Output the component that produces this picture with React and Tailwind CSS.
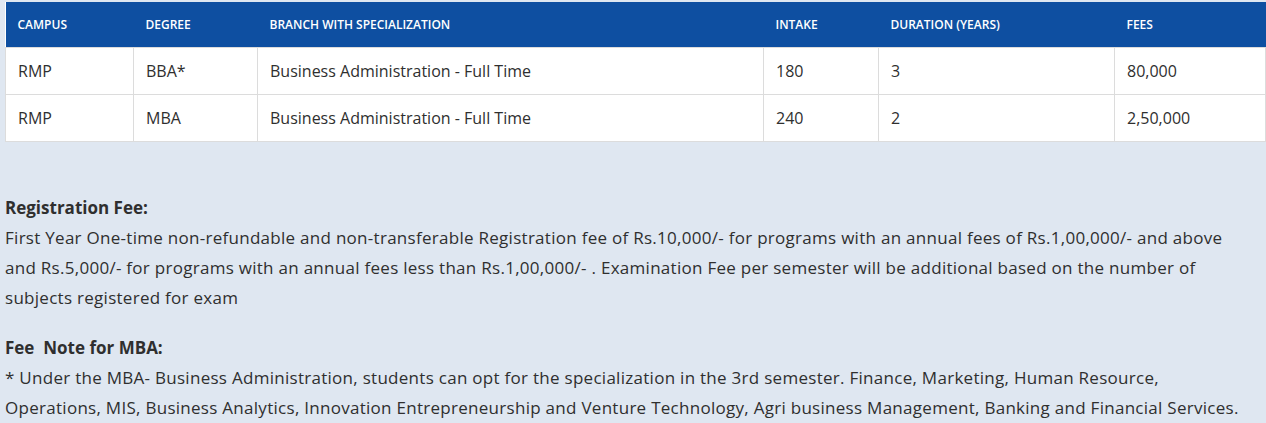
const rows = [
  { campus: 'RMP', degree: 'BBA*', branch: 'Business Administration - Full Time', intake: '180', duration: '3', fees: '80,000' },
  { campus: 'RMP', degree: 'MBA', branch: 'Business Administration - Full Time', intake: '240', duration: '2', fees: '2,50,000' },
];

const heads = ['CAMPUS', 'DEGREE', 'BRANCH WITH SPECIALIZATION', 'INTAKE', 'DURATION (YEARS)', 'FEES'];
const widths = ['w-[128px]', 'w-[124px]', 'w-[506px]', 'w-[115px]', 'w-[236px]', 'w-[151px]'];

export default function App() {
  return (
    <div className="min-h-[423px] bg-[#dfe7f1] pt-[2px] px-[5px] pr-[1px] text-[#2f2f2f] font-['Open_Sans',sans-serif]">
      {/* Fee table */}
      <table className="w-[1260px] border-collapse table-fixed bg-white">
        <thead>
          <tr className="bg-[#0e4fa1] h-[45px]">
            {heads.map((h, i) => (
              <th key={h} className={`${widths[i]} text-left font-semibold text-[12px] text-white pl-3 pt-[2px] align-middle`}>
                {h}
              </th>
            ))}
          </tr>
        </thead>
        <tbody>
          {rows.map((r, i) => (
            <tr key={i} className="h-[47px] text-[16px]">
              <td className="border border-[#dcdcdc] pl-3">{r.campus}</td>
              <td className="border border-[#dcdcdc] pl-3">{r.degree}</td>
              <td className="border border-[#dcdcdc] pl-3">{r.branch}</td>
              <td className="border border-[#dcdcdc] pl-3">{r.intake}</td>
              <td className="border border-[#dcdcdc] pl-3">{r.duration}</td>
              <td className="border border-[#dcdcdc] pl-3">{r.fees}</td>
            </tr>
          ))}
        </tbody>
      </table>

      {/* Notes */}
      <div className="mt-[51px] pr-[10px] text-[17px] leading-[30px]">
        <p className="font-bold">Registration Fee:</p>
        <p className="tracking-[0.28px]">
          First Year One-time non-refundable and non-transferable Registration fee of Rs.10,000/- for programs with an annual fees of Rs.1,00,000/- and above and Rs.5,000/- for programs with an annual fees less than Rs.1,00,000/- . Examination Fee per semester will be additional based on the number of subjects registered for exam
        </p>
        <p className="font-bold mt-5">Fee&nbsp; Note for MBA:</p>
        <p className="tracking-[0.28px]">
          * Under the MBA- Business Administration, students can opt for the specialization in the 3rd semester. Finance, Marketing, Human Resource, Operations, MIS, Business Analytics, Innovation Entrepreneurship and Venture Technology, Agri business Management, Banking and Financial Services.
        </p>
      </div>
    </div>
  );
}
